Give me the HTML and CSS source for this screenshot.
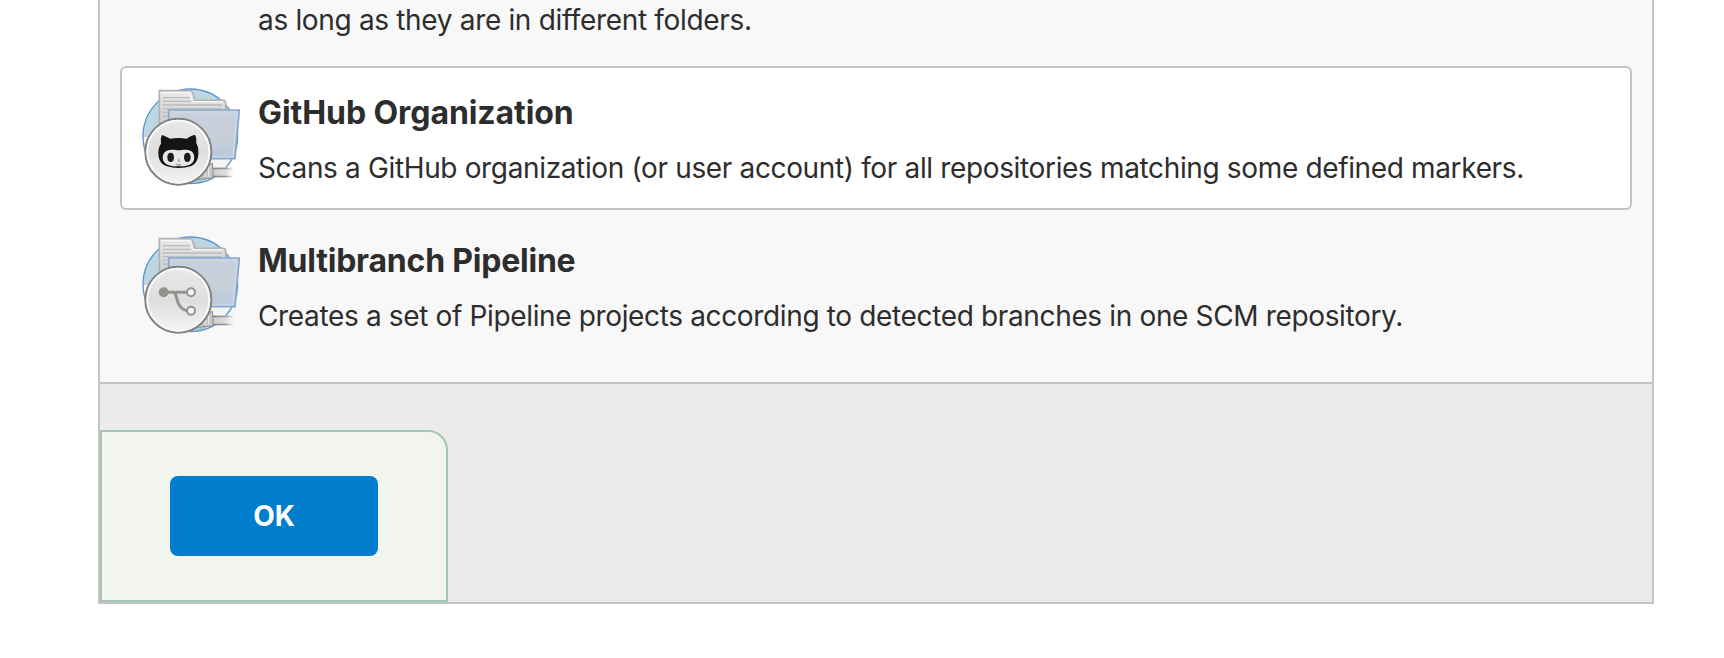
FILE: index.html
```html
<!DOCTYPE html>
<html lang="en">
<head>
<meta charset="utf-8">
<title>New Item</title>
<link rel="stylesheet" href="styles.css">
</head>
<body>
<svg class="defs" width="0" height="0" aria-hidden="true">
  <defs>
    <linearGradient id="paper" x1="0" y1="0" x2="0" y2="1"><stop offset="0" stop-color="#eaeaea"/><stop offset="1" stop-color="#bcbcbc"/></linearGradient>
    <linearGradient id="folder" x1="0" y1="0" x2="0" y2="1"><stop offset="0" stop-color="#c7d1dd"/><stop offset=".65" stop-color="#c6ced8"/><stop offset="1" stop-color="#b8c8dc"/></linearGradient>
    <linearGradient id="badge" x1="0" y1="0" x2="0" y2="1"><stop offset="0" stop-color="#e9e9e9"/><stop offset=".5" stop-color="#dedede"/><stop offset="1" stop-color="#f4f4f4"/></linearGradient>
    <linearGradient id="cable" x1="0" y1="0" x2="1" y2="0"><stop offset="0" stop-color="#808080"/><stop offset=".6" stop-color="#989898"/><stop offset="1" stop-color="#a3a3a3" stop-opacity="0"/></linearGradient>
    <linearGradient id="cableBody" x1="0" y1="0" x2="1" y2="0"><stop offset="0" stop-color="#cfcfcf"/><stop offset=".6" stop-color="#dcdcdc"/><stop offset="1" stop-color="#eeeeee" stop-opacity="0"/></linearGradient>
    <filter id="soft" x="-5%" y="-5%" width="110%" height="110%" color-interpolation-filters="sRGB"><feGaussianBlur stdDeviation="1.7"/></filter>
    <clipPath id="globe"><circle cx="181" cy="181" r="142"/></clipPath>
    <symbol id="folder-base" viewBox="36 36 294 294">
      <g clip-path="url(#globe)">
        <path d="M36 36H330V184H36Z" fill="#bcd7e3"/>
        <path d="M36 184H120L90 240H40Z" fill="#f3f7f8"/>
        <path d="M220 250H330V330H180Z" fill="#f2f4f5"/>
        <path d="M150 322C176 310 210 304 238 303L210 325Z" fill="#a9cfdc"/>
      </g>
      <circle cx="181" cy="181" r="142" fill="none" stroke="#5b95ce" stroke-width="4"/>
      <g filter="url(#soft)">
        <path d="M88 44H180Q186 44 188 50L195 73H280Q287 73 287 82V200H88Z" fill="url(#paper)" stroke="#b2b2b2" stroke-width="5"/>
        <path d="M98 65H182M98 76H189M98 87H276M98 98H276M98 109H112M98 120H112" stroke="#bdbdbd" stroke-width="4" fill="none"/>
        <path d="M93 50H178L187 77H278" stroke="#f7f7f7" stroke-width="4" fill="none"/>
        <path d="M116 102H328L315 248H116Z" fill="url(#folder)" stroke="#86a7d2" stroke-width="5"/>
        <path d="M121 108H321L309 243H240" fill="none" stroke="#d4dce5" stroke-width="3"/>
        <path d="M250 274H312V304H250Z" fill="url(#cableBody)"/>
        <path d="M248 275H312V280H248ZM248 299H312V304H248Z" fill="url(#cable)"/>
        <path d="M198 312L225 270L247 262Q251 284 249 306L205 310Z" fill="#c5c5c5" stroke="#8b8b8b" stroke-width="3"/>
        <path d="M226 276V302M236 270V302" stroke="#e8e8e8" stroke-width="4"/>
        <circle cx="145" cy="227" r="99" fill="url(#badge)" stroke="#808080" stroke-width="6"/>
        <circle cx="145" cy="227" r="93" fill="none" stroke="#f8f8f8" stroke-width="6"/>
      </g>
    </symbol>
  </defs>
</svg>

<main class="panel">
  <ul class="items">
    <li class="item item-clipped">
      <div class="item-text"><p class="item-desc desc-folder">as long as they are in different folders.</p></div>
    </li>
    <li class="item item-active">
      <svg class="item-icon" viewBox="36 36 294 294">
        <use href="#folder-base" x="36" y="36" width="294" height="294"/>
        <g filter="url(#soft)">
          <path d="M95 178Q98 175 120 188Q146 184 170 188Q192 174 196 178Q200 187 199 202Q208 216 204 243Q200 263 184 270Q165 276 146 276Q127 276 108 270Q90 263 86 243Q82 216 93 203Q91 187 95 178Z" fill="#141414"/>
          <path d="M118 222C132 219 136 223 146 223S160 219 174 222C190 225 195 238 192 251C188 267 169 271 146 271S103 267 99 251C96 238 102 225 118 222Z" fill="#e8e8e8"/>
          <ellipse cx="122" cy="244" rx="10" ry="14" fill="#1c1c1c"/>
          <ellipse cx="172" cy="244" rx="10" ry="14" fill="#1c1c1c"/>
          <path d="M146 250V258M139 265Q146 269 153 265" fill="none" stroke="#999999" stroke-width="4"/>
        </g>
      </svg>
      <div class="item-text">
        <h2 class="item-title title-github">GitHub Organization</h2>
        <p class="item-desc">Scans a GitHub organization (or user account) for all repositories matching some defined markers.</p>
      </div>
    </li>
    <li class="item">
      <svg class="item-icon" viewBox="36 36 294 294">
        <use href="#folder-base" x="36" y="36" width="294" height="294"/>
        <g filter="url(#soft)" fill="none" stroke="#92958f" stroke-width="9">
          <path d="M100 199H170M132 200C142 208 139 223 147 236Q154 250 170 254" transform="translate(0 6)"/>
          <circle cx="101" cy="205" r="15" fill="#92958f" stroke="none"/>
          <circle cx="183" cy="205" r="12" fill="#f4f4f4" stroke-width="6"/>
          <circle cx="183" cy="260" r="12" fill="#f4f4f4" stroke-width="6"/>
        </g>
      </svg>
      <div class="item-text">
        <h2 class="item-title title-multi">Multibranch Pipeline</h2>
        <p class="item-desc">Creates a set of Pipeline projects according to detected branches in one SCM repository.</p>
      </div>
    </li>
  </ul>
  <footer class="footer">
    <div class="footer-box"><button class="ok" type="button">OK</button></div>
  </footer>
</main>
</body>
</html>
```
FILE: styles.css
```css
* { box-sizing: border-box; }

body {
  margin: 0;
  background: #fff;
  color: #2d2d2d;
  font-family: Inter, "Liberation Sans", sans-serif;
  overflow: hidden;
}

.defs { display: block; }

.panel {
  width: 1556px;
  height: 604px;
  margin-left: 98px;
  border: 2px solid #c4c4c4;
  border-top: 0;
  background: #f8f8f8;
}

.items {
  display: flex;
  flex-direction: column;
  gap: 4px;
  height: 382px;
  margin: 0;
  padding: 0 20px;
  list-style: none;
}

.item {
  display: flex;
  gap: 18px;
  height: 144px;
  padding: 20px;
  border: 2px solid transparent;
  border-radius: 6px;
}

.item-clipped {
  height: 62px;
  padding: 0 20px 0 136px;
  border-top: 0;
}

.item-active {
  border-color: #c4c4c4;
  background: #fff;
}

.item-icon {
  flex: none;
  width: 98px;
  height: 98px;
}

.item-text { white-space: nowrap; }

.item-title {
  margin: 5px 0 15px;
  font-size: 32px;
  font-weight: 700;
  line-height: 40px;
}

.title-github { letter-spacing: -0.08px; }
.title-multi { letter-spacing: -0.22px; }

.item-desc {
  margin: 0;
  font-size: 28px;
  line-height: 40px;
  letter-spacing: -0.353px;
}

.desc-folder { letter-spacing: -0.33px; }

.footer {
  display: flex;
  align-items: flex-end;
  height: 220px;
  border-top: 2px solid #c4c4c4;
  background: #ebebeb;
}

.footer-box {
  width: 348px;
  height: 172px;
  padding: 44px 68px;
  border: 2px solid #a2c5b4;
  border-radius: 0 20px 0 0;
  background: #f2f5ee;
}

.ok {
  display: block;
  width: 208px;
  height: 80px;
  padding: 0;
  border: 0;
  border-radius: 8px;
  background: #007dcc;
  color: #fff;
  font: 700 28px/80px Inter, "Liberation Sans", sans-serif;
}
```
